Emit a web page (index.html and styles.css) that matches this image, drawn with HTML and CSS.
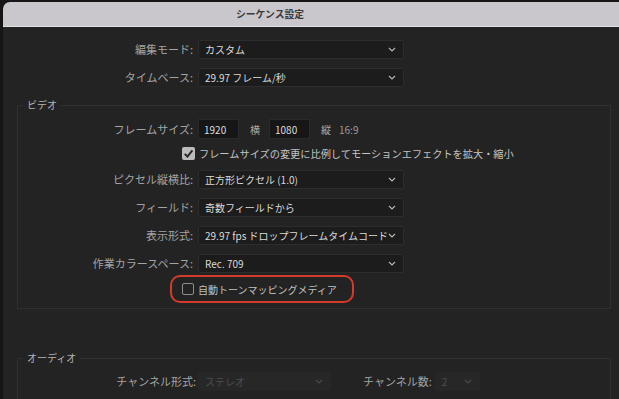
FILE: index.html
```html
<!DOCTYPE html>
<html lang="ja">
<head>
    <meta charset="UTF-8">
    <title>シーケンス設定</title>
    <link rel="stylesheet" href="styles.css">
</head>
<body>
    <div class="window">
        <div class="titlebar">シーケンス設定</div>

        <div class="content">
            <div class="row top">
                <span class="label">編集モード:</span>
                <div class="select"><span>カスタム</span><svg class="chev" viewBox="0 0 8 5"><polyline points="1,1 4,4 7,1"/></svg></div>
            </div>
            <div class="row top">
                <span class="label">タイムベース:</span>
                <div class="select"><span>29.97 フレーム/秒</span><svg class="chev" viewBox="0 0 8 5"><polyline points="1,1 4,4 7,1"/></svg></div>
            </div>

            <fieldset class="group video">
                <legend>ビデオ</legend>

                <div class="row frame">
                    <span class="label">フレームサイズ:</span>
                    <div class="sizes">
                        <span class="field">1920</span>
                        <span class="unit">横</span>
                        <span class="field">1080</span>
                        <span class="unit">縦</span>
                        <span class="ratio">16:9</span>
                    </div>
                </div>

                <div class="row check-row">
                    <span class="label"></span>
                    <label class="check">
                        <span class="box checked"><svg viewBox="0 0 12 12"><polyline points="2.5,6.3 5,8.8 9.6,3.2"/></svg></span>
                        <span>フレームサイズの変更に比例してモーションエフェクトを拡大・縮小</span>
                    </label>
                </div>

                <div class="row pixel">
                    <span class="label">ピクセル縦横比:</span>
                    <div class="select"><span>正方形ピクセル (1.0)</span><svg class="chev" viewBox="0 0 8 5"><polyline points="1,1 4,4 7,1"/></svg></div>
                </div>
                <div class="row">
                    <span class="label">フィールド:</span>
                    <div class="select"><span>奇数フィールドから</span><svg class="chev" viewBox="0 0 8 5"><polyline points="1,1 4,4 7,1"/></svg></div>
                </div>
                <div class="row">
                    <span class="label">表示形式:</span>
                    <div class="select"><span>29.97 fps ドロップフレームタイムコード</span><svg class="chev" viewBox="0 0 8 5"><polyline points="1,1 4,4 7,1"/></svg></div>
                </div>
                <div class="row">
                    <span class="label">作業カラースペース:</span>
                    <div class="select"><span>Rec. 709</span><svg class="chev" viewBox="0 0 8 5"><polyline points="1,1 4,4 7,1"/></svg></div>
                </div>

                <div class="row tone-row">
                    <span class="label"></span>
                    <div class="highlight">
                        <label class="check">
                            <span class="box"></span>
                            <span>自動トーンマッピングメディア</span>
                        </label>
                    </div>
                </div>
            </fieldset>

            <fieldset class="group audio">
                <legend>オーディオ</legend>
                <div class="row audio-row">
                    <span class="label">チャンネル形式:</span>
                    <div class="select disabled wide"><span>ステレオ</span><svg class="chev" viewBox="0 0 8 5"><polyline points="1,1 4,4 7,1"/></svg></div>
                    <span class="label sub">チャンネル数:</span>
                    <div class="select disabled narrow"><span>2</span><svg class="chev" viewBox="0 0 8 5"><polyline points="1,1 4,4 7,1"/></svg></div>
                </div>
            </fieldset>
        </div>
    </div>
</body>
</html>
```

FILE: styles.css
```css
html, body {
    margin: 0;
    height: 100%;
    overflow: hidden;
}
body {
    background-color: #161616;
    font-family: "Noto Sans CJK JP", "Liberation Sans", sans-serif;
    font-size: 10px;
    color: #a9a9a9;
}
.window {
    margin: 2px 0 0 2px;
    height: 397px;
    background-color: #232323;
    border-left: 1px solid #141414;
    border-top-left-radius: 7px;
}
.titlebar {
    height: 24px;
    line-height: 24px;
    padding-left: 233px;
    background-color: #c9c7cc;
    border-bottom: 1px solid #e2e1e4;
    border-top-left-radius: 7px;
    color: #3b3a3d;
    font-size: 9.8px;
    font-weight: bold;
}
.content {
    padding-top: 13px;
}
.row {
    display: grid;
    grid-template-columns: 175px 206px;
    column-gap: 5px;
    align-items: center;
    height: 19px;
    margin-top: 9px;
}
.row.top {
    grid-template-columns: 190px 206px;
}
.row.top:first-child {
    margin-top: 0;
}
.label {
    text-align: right;
    white-space: nowrap;
    line-height: 19px;
    font-size: 11px;
    color: #a4a4a4;
}
.select {
    display: flex;
    align-items: center;
    justify-content: space-between;
    height: 17px;
    padding: 0 7px 0 6px;
    background-color: #1c1c1c;
    border: 1px solid #2d2d2d;
    border-radius: 2px;
    color: #dadada;
    line-height: 17px;
    white-space: nowrap;
}
.chev {
    width: 8px;
    height: 5px;
    flex-shrink: 0;
    fill: none;
    stroke: #b5b5b5;
    stroke-width: 1.2;
}
.group {
    margin: 11px 8px 0 14px;
    padding: 0 0 5px 0;
    border: 1px solid #303030;
    min-width: 0;
}
.group legend {
    margin-left: 5px;
    padding: 0 4px;
    line-height: 14px;
    color: #b3b3b3;
}
.row.frame {
    margin-top: 7px;
}
.sizes {
    display: flex;
    align-items: center;
    color: #a9a9a9;
}
.field {
    width: 34px;
    height: 18px;
    padding-left: 5px;
    line-height: 20px;
    background-color: #161616;
    border: 1px solid #2a2a2a;
    color: #dedede;
}
.unit {
    margin: 0 9px 0 11px;
}
.ratio {
    margin-left: -1px;
    color: #9c9c9c;
}
.row.check-row {
    margin-top: 6px;
    grid-template-columns: 159px auto;
}
.row.pixel {
    margin-top: 7px;
}
.check {
    display: flex;
    align-items: center;
    gap: 4px;
    color: #c4c4c4;
    white-space: nowrap;
}
.check-row .check {
    font-size: 10.2px;
}
.box {
    width: 10px;
    height: 10px;
    border: 1.5px solid #8e8e8e;
    border-radius: 2px;
}
.box.checked {
    width: 13px;
    height: 13px;
    border: none;
    background-color: #bcbcbc;
}
.box.checked svg {
    display: block;
    width: 13px;
    height: 13px;
    fill: none;
    stroke: #262626;
    stroke-width: 1.8;
}
.row.tone-row {
    margin-top: 2px;
    height: 28px;
    grid-template-columns: 147px auto;
}
.highlight {
    display: inline-flex;
    align-items: center;
    width: 170px;
    height: 24px;
    padding-left: 10px;
    border: 2px solid #d43b2b;
    border-radius: 10px;
    justify-self: start;
}
.highlight .check {
    color: #c0c0c0;
}
.audio {
    margin-top: 42px;
    height: 60px;
}
.row.audio-row {
    margin-top: 7px;
    display: flex;
    column-gap: 0;
}
.audio-row .label {
    width: 178px;
    margin-right: 2px;
}
.audio-row .label.sub {
    width: auto;
    margin-left: 32px;
    margin-right: 3px;
}
.select.disabled {
    background-color: #272727;
    border-color: #272727;
    color: #4e4e4e;
}
.select.disabled .chev {
    stroke: #4a4a4a;
}
.select.wide {
    width: 118px;
}
.select.narrow {
    width: 30px;
}
```
